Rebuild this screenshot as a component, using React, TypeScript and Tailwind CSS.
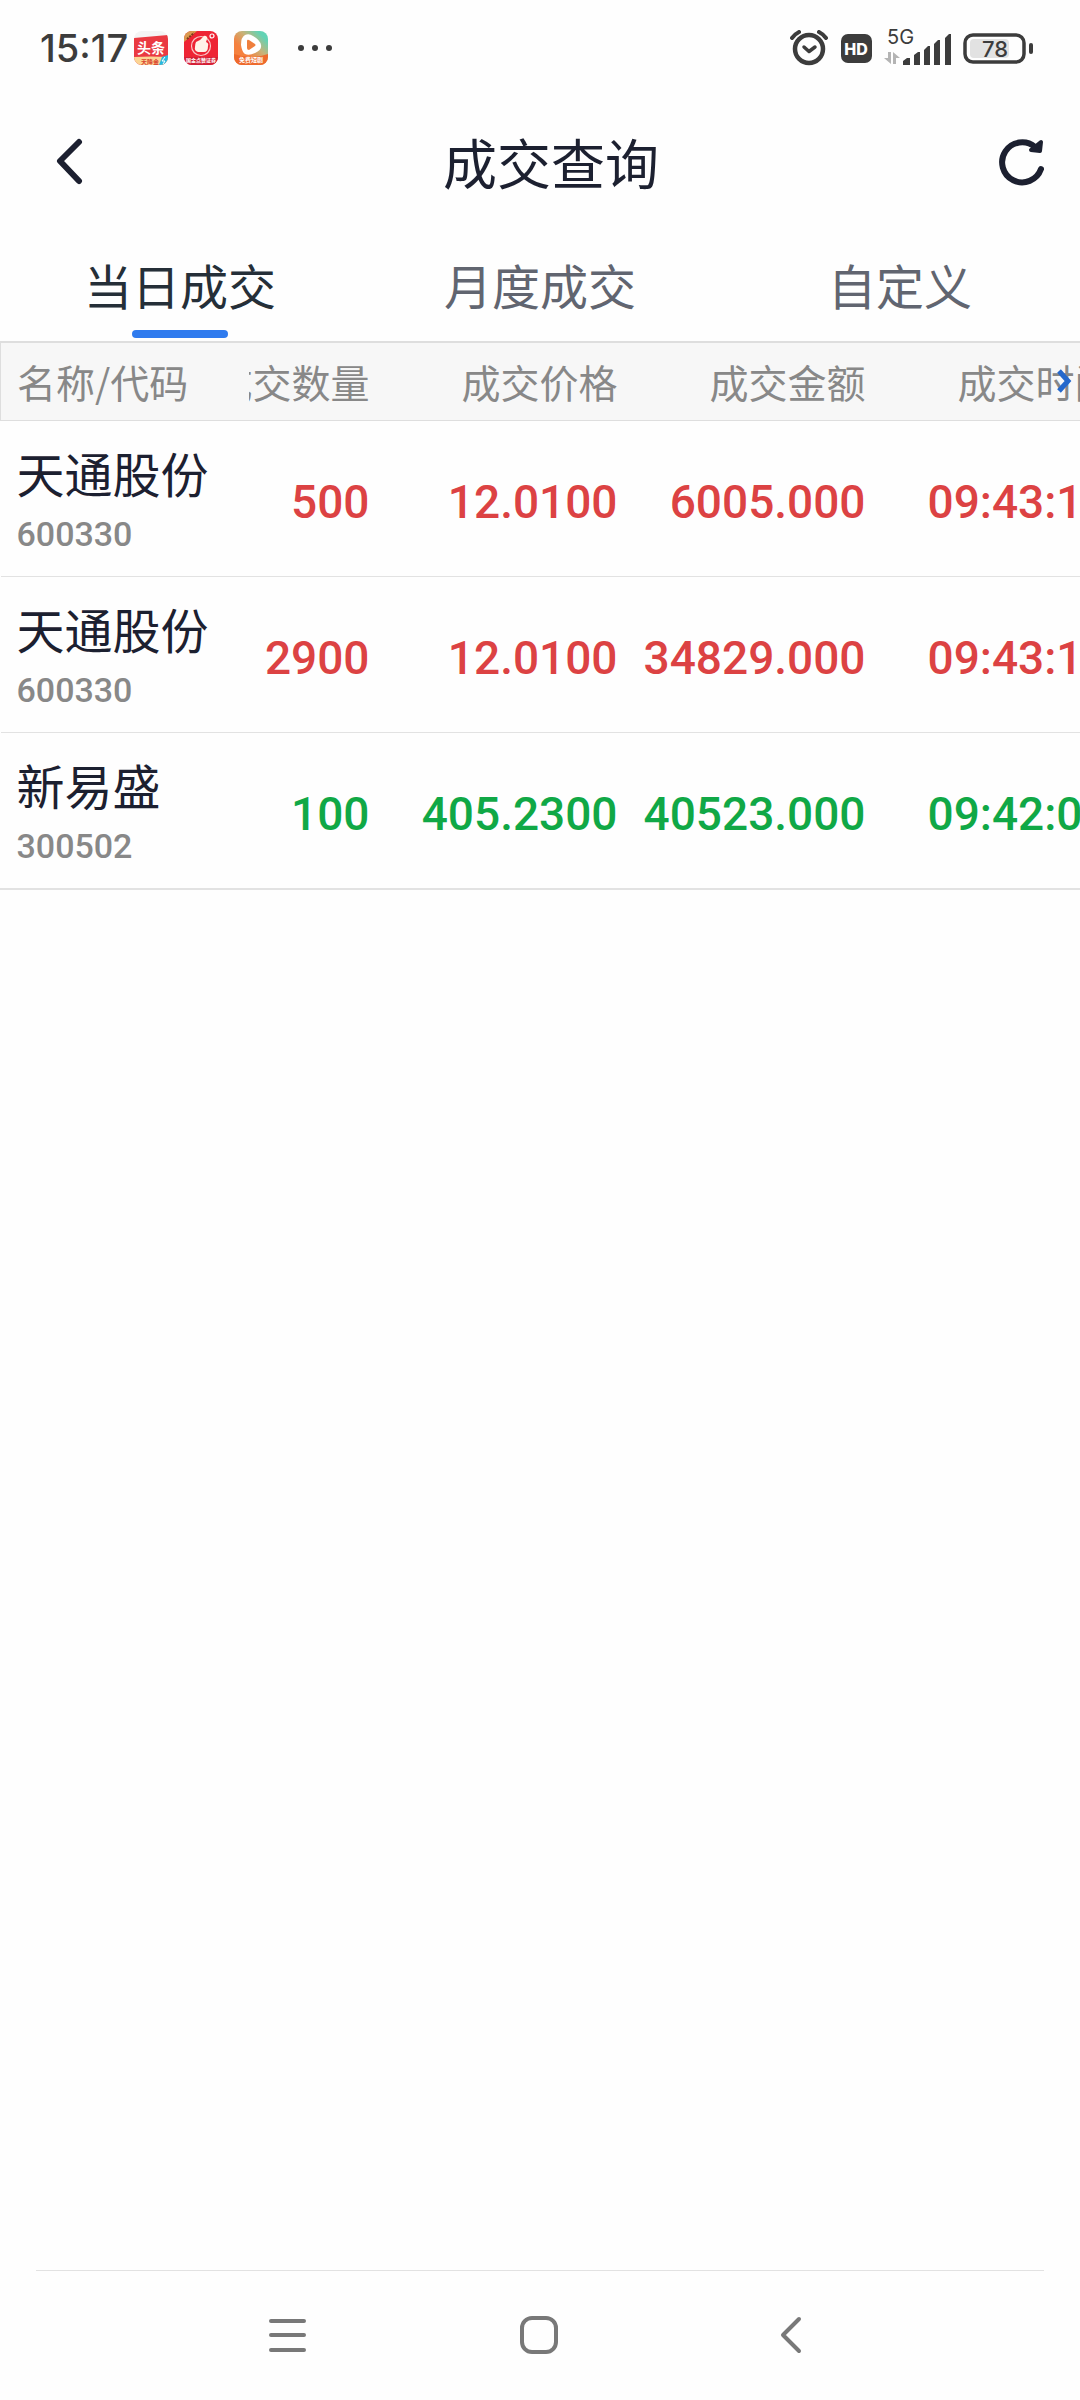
import { clsx } from "clsx";

const tabs = ["当日成交", "月度成交", "自定义"];

const columns = ["成交数量", "成交价格", "成交金额", "成交时间"];

const trades = [
  { name: "天通股份", code: "600330", side: "buy", values: ["500", "12.0100", "6005.000", "09:43:12"] },
  { name: "天通股份", code: "600330", side: "buy", values: ["2900", "12.0100", "34829.000", "09:43:12"] },
  { name: "新易盛", code: "300502", side: "sell", values: ["100", "405.2300", "40523.000", "09:42:05"] },
];

function AppBadges() {
  return (
    <div className="flex items-center gap-4">
      {/* Toutiao */}
      <svg className="size-[34px]" viewBox="0 0 34 34">
        <defs>
          <clipPath id="badge">
            <rect width="34" height="34" rx="8" />
          </clipPath>
        </defs>
        <g clipPath="url(#badge)">
          <rect width="34" height="34" fill="#f4f4f4" />
          <path d="M0 7 34 4v30H0z" fill="#ea3a42" />
          <path d="M0 26q17-1 34 0v8H0z" fill="#fbd594" />
          <path d="m28 26 6-2v10h-9z" fill="#27b9e0" />
          <path d="m31 26-3 4h3l-2 3" stroke="#fff" fill="none" />
        </g>
        <text x="17" y="22" textAnchor="middle" fontSize="14" fontWeight="700" fill="#fff">头条</text>
        <text x="16" y="33" textAnchor="middle" fontSize="6" fontWeight="700" fill="#d9432f">天降金</text>
      </svg>
      {/* thumbs-up */}
      <svg className="size-[34px]" viewBox="0 0 34 34">
        <g clipPath="url(#badge)">
          <rect width="34" height="34" fill="#ee2434" />
          <path d="M0 0h13L0 11z" fill="#d99a4e" />
          <path d="m3 8 7-6" stroke="#7c3a1c" strokeWidth="2" strokeDasharray="2 1" />
          <path d="M0 26h34v8H0z" fill="#d31f35" />
          <circle cx="17" cy="15" r="9.5" fill="none" stroke="#f9c5c5" strokeWidth="1.2" />
          <path d="M12 11q2-1 4-2l3-3q1-2 3-1t1 3l-1 3q3 1 2 4 0 6-4 6h-6q-4-1-3-5 0-3 1-5z" fill="#fff3e8" />
          <circle cx="28" cy="5" r="2" fill="none" stroke="#fff" strokeWidth="1.2" />
        </g>
        <text x="17" y="31" textAnchor="middle" fontSize="5" fontWeight="700" fill="#fff">国金点赞证券</text>
      </svg>
      {/* video */}
      <svg className="size-[34px]" viewBox="0 0 34 34">
        <defs>
          <linearGradient id="video" x1="0" y1="1" x2="1" y2="0">
            <stop offset="0.35" stopColor="#f5813f" />
            <stop offset="0.6" stopColor="#c9b277" />
            <stop offset="0.85" stopColor="#62d3b4" />
          </linearGradient>
        </defs>
        <g clipPath="url(#badge)">
          <rect width="34" height="34" fill="url(#video)" />
          <path d="M0 23q17 6 34 0v11H0z" fill="#ee6a2c" />
          <path d="M11 4q4-2 8 1 7 4 8 9t-6 8q-6 3-10 1-3-2-4-9 0-8 4-10z" fill="#fff" />
          <path d="M13 10q0-2 2-1l6 4q1 1 0 2l-6 4q-2 0-2-2z" fill="#ef7f3d" />
        </g>
        <text x="17" y="31" textAnchor="middle" fontSize="6" fontWeight="700" fill="#fff">免费短剧</text>
      </svg>
    </div>
  );
}

function StatusBar() {
  return (
    <div className="flex h-24 items-center justify-between pr-[47px] pl-10 text-[#3c3c3c]">
      <div className="flex items-center">
        <span className="mr-1.5 font-['Inter',sans-serif] text-[38px] leading-none font-medium">15:17</span>
        <AppBadges />
        <svg className="ml-7 h-2 w-9" viewBox="0 0 36 8" fill="currentColor">
          <circle cx="5" cy="4" r="3" />
          <circle cx="19" cy="4" r="3" />
          <circle cx="33" cy="4" r="3" />
        </svg>
      </div>
      <div className="flex items-center">
        <svg className="h-9 w-10" viewBox="0 0 40 36" fill="none" stroke="currentColor" strokeLinecap="round">
          <circle cx="20" cy="19" r="14" strokeWidth="4.5" />
          <path d="m15 17 5 4.500 6-4.500" strokeWidth="3.500" strokeLinejoin="round" />
          <path d="M3 8q3-4 7-6M30 2q4 2 7 6" strokeWidth="4" />
        </svg>
        <svg className="ml-3 h-[29px] w-[31px]" viewBox="0 0 31 29">
          <rect width="31" height="29" rx="7" fill="currentColor" />
          <text x="15" y="21" textAnchor="middle" fontFamily="Inter, sans-serif" fontSize="16" fontWeight="800" fill="#fff">HD</text>
        </svg>
        <svg className="ml-3 h-9 w-[67px] overflow-visible" viewBox="0 0 67 36" fill="currentColor">
          <text x="3" y="14" fontFamily="Inter, sans-serif" fontSize="20">5G</text>
          <path d="M4 22h3v12L0 28h4zM9 34V22l7 6h-4v6z" fill="#b4b4b4" />
          <path d="M19 31l4-3h3v7h-7zM30 25l4-3h2v13h-6zM40 20l4-4h2v19h-6zM50 14l4-4h2v25h-6zM61 8l4-4h2v31h-6z" />
        </svg>
        <svg className="ml-3 h-[31px] w-[70px]" viewBox="0 0 70 31">
          <rect x="2" y="2" width="59" height="27" rx="8" fill="none" stroke="currentColor" strokeWidth="3.500" />
          <rect x="7" y="6" width="39" height="19" rx="4" fill="#e2e2e2" />
          <rect x="66" y="10" width="4" height="11" rx="2" fill="currentColor" />
          <text x="32" y="24" textAnchor="middle" fontFamily="Inter, sans-serif" fontSize="22" fontWeight="500" fill="currentColor">78</text>
        </svg>
      </div>
    </div>
  );
}

function Header() {
  return (
    <header className="grid h-[136px] grid-cols-[1fr_auto_1fr] items-center pr-[34px] pb-1 pl-14 text-[#1c2030]">
      <button aria-label="返回" className="h-12 w-7">
        <svg className="h-12 w-7" viewBox="0 0 28 48" fill="none" stroke="currentColor" strokeWidth="6" strokeLinecap="round" strokeLinejoin="round">
          <path d="M23 4 4 23l19 20" />
        </svg>
      </button>
      <h1 className="text-[54px] leading-none">成交查询</h1>
      <button aria-label="刷新" className="size-12 justify-self-end">
        <svg className="size-12" viewBox="0 0 48 48" fill="none" stroke="currentColor" strokeWidth="6" strokeLinecap="round" strokeLinejoin="round">
          <path d="M43 31A20 20 0 1 1 37 9" />
          <path d="M43 4 42 13 33 12 38 8z" fill="currentColor" strokeWidth="4" />
        </svg>
      </button>
    </header>
  );
}

function Tabs() {
  return (
    <nav className="grid h-[109px] grid-cols-3" role="tablist">
      {tabs.map((tab, i) => (
        <button
          key={tab}
          role="tab"
          aria-selected={i === 0}
          className={clsx("flex flex-col items-center justify-end pb-[3px] text-[48px]", i === 0 ? "text-[#252f38]" : "text-[#616570]")}
        >
          <span className="mb-4 leading-[60px]">{tab}</span>
          <span className={clsx("h-2 w-24 rounded-full", i === 0 && "bg-[#2f7bee]")} />
        </button>
      ))}
    </nav>
  );
}

function TradeTable() {
  return (
    <div className="relative overflow-hidden border-b-2 border-[#e2e2e2]">
      <table className="w-[1240px] table-fixed border-collapse">
        <colgroup>
          <col className="w-[248px]" />
          <col className="w-[121px]" />
          <col className="w-[248px]" />
          <col className="w-[248px]" />
          <col className="w-[248px]" />
          <col />
        </colgroup>
        <thead>
          <tr className="h-[78px] border-t-2 border-b border-[#dedede] bg-[#f7f7f7] text-[39px] text-[#888]">
            <th scope="col" className="border-l border-[#dedede] pl-4 text-left font-normal whitespace-nowrap">名称/代码</th>
            {columns.map((column) => (
              <th key={column} scope="col" className="overflow-hidden font-normal whitespace-nowrap">
                <div className="flex justify-end leading-[56px]">{column}</div>
              </th>
            ))}
            <th />
          </tr>
        </thead>
        <tbody>
          {trades.map((trade, i) => (
            <tr key={i} className="h-[156px] border-b border-[#e2e2e2] last:border-b-0">
              <td className="pt-3 pl-4">
                <div className="text-[48px] leading-[60px] text-[#1c2030]">{trade.name}</div>
                <div className="font-['Roboto',sans-serif] text-[34px] leading-[64px] font-medium text-[#888]">{trade.code}</div>
              </td>
              {trade.values.map((value, j) => (
                <td
                  key={j}
                  className={clsx(
                    "pt-2 font-['Roboto',sans-serif] text-[46px] leading-none font-medium whitespace-nowrap",
                    j === 3 ? "pl-[62px] text-left" : "text-right",
                    trade.side === "buy" ? "text-[#dc4243]" : "text-[#10a846]",
                  )}
                >
                  {value}
                </td>
              ))}
              <td />
            </tr>
          ))}
        </tbody>
      </table>
      <svg className="absolute top-7 right-2 h-6 w-4" viewBox="0 0 16 24" fill="none" stroke="#2468cc" strokeWidth="5">
        <path d="m3 2 9 10-9 10" />
      </svg>
    </div>
  );
}

function NavigationBar() {
  return (
    <footer className="mx-9 mt-auto flex h-[130px] items-center justify-center gap-[207px] border-t border-[#e2e2e2] text-[#787878]">
      <button aria-label="最近任务">
        <svg className="size-11" viewBox="0 0 44 44" fill="none" stroke="currentColor" strokeWidth="4" strokeLinecap="round">
          <path d="M4 7h33M4 21h33M4 36h33" />
        </svg>
      </button>
      <button aria-label="主屏幕">
        <svg className="size-11" viewBox="0 0 44 44" fill="none" stroke="currentColor" strokeWidth="4">
          <rect x="4" y="4" width="34" height="34" rx="10" />
        </svg>
      </button>
      <button aria-label="后退">
        <svg className="size-11" viewBox="0 0 44 44" fill="none" stroke="currentColor" strokeWidth="4" strokeLinecap="round" strokeLinejoin="round">
          <path d="M30 5 14 21l16 16" />
        </svg>
      </button>
    </footer>
  );
}

export default function App() {
  return (
    <div className="flex min-h-screen flex-col overflow-hidden bg-[#fefefe] font-['Noto_Sans_CJK_SC',sans-serif]">
      <StatusBar />
      <Header />
      <Tabs />
      <TradeTable />
      <NavigationBar />
    </div>
  );
}
